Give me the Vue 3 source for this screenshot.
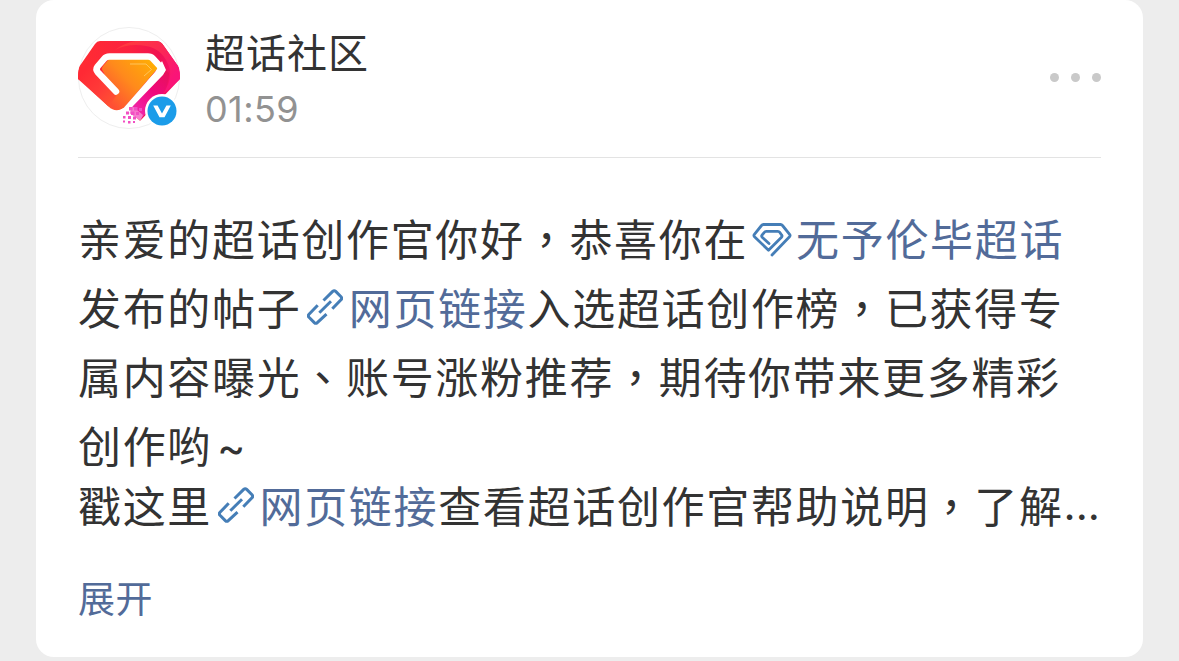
<script setup>
const lines = [
  [
    { type: "text", value: "亲爱的超话创作官你好，恭喜你在" },
    { type: "topic", value: "无予伦毕超话" },
  ],
  [
    { type: "text", value: "发布的帖子" },
    { type: "link", value: "网页链接" },
    { type: "text", value: "入选超话创作榜，已获得专" },
  ],
  [{ type: "text", value: "属内容曝光、账号涨粉推荐，期待你带来更多精彩" }],
  [
    { type: "text", value: "创作哟" },
    { type: "tilde", value: "~" },
  ],
  [
    { type: "text", value: "戳这里" },
    { type: "link", value: "网页链接" },
    { type: "text", value: "查看超话创作官帮助说明，了解" },
    { type: "dots", value: "..." },
  ],
]

// punctuation is centred in its box, so it gets its own font
function split(value){
  return value.split(/([，、])/)
}

function isMark(part){
  return part === "，" || part === "、"
}
</script>

<template>
  <div class="page">
    <article class="card">
      <header class="header">
        <div class="avatar">
          <svg class="logo" viewBox="0 0 102 102">
            <defs>
              <linearGradient id="ring" gradientUnits="userSpaceOnUse" x1="5" y1="40" x2="98" y2="48">
                <stop offset="0" stop-color="#ff2b33" />
                <stop offset="0.5" stop-color="#fb2140" />
                <stop offset="0.8" stop-color="#f01252" />
                <stop offset="1" stop-color="#f80f70" />
              </linearGradient>
              <linearGradient id="right" gradientUnits="userSpaceOnUse" x1="50" y1="14" x2="96" y2="50">
                <stop offset="0" stop-color="#ff3a3f" />
                <stop offset="0.5" stop-color="#fb2a50" />
                <stop offset="1" stop-color="#fa1478" />
              </linearGradient>
              <linearGradient id="left" gradientUnits="userSpaceOnUse" x1="8" y1="42" x2="46" y2="76">
                <stop offset="0" stop-color="#ff2934" />
                <stop offset="0.5" stop-color="#ff3c38" />
                <stop offset="1" stop-color="#ff5c2e" />
              </linearGradient>
              <linearGradient id="gold" gradientUnits="userSpaceOnUse" x1="30" y1="74" x2="72" y2="34">
                <stop offset="0" stop-color="#ff4f34" />
                <stop offset="0.5" stop-color="#ff8a1c" />
                <stop offset="1" stop-color="#ffac06" />
              </linearGradient>
              <linearGradient id="tail" gradientUnits="userSpaceOnUse" x1="90" y1="42" x2="54" y2="90">
                <stop offset="0" stop-color="#e61256" />
                <stop offset="0.45" stop-color="#f0087c" />
                <stop offset="1" stop-color="#f02cb4" />
              </linearGradient>
              <clipPath id="round"><circle cx="51" cy="51" r="51" /></clipPath>
            </defs>
            <circle cx="51" cy="51" r="50.500" fill="#fff" stroke="#eeeeee" />
            <g clip-path="url(#round)">
              <path d="M22 14H78Q82 14 84.500 17L100 39Q103 44 102 52L62 94 50 84 0 52V43Q0 41 1 40L17 17Q19 14 22 14Z" fill="url(#ring)" />
              <path d="M37 23Q46 16 58 14H78Q82 14 84.500 17L100 39Q103 44 102 52L84 68Q98 50 88 33 80 18 58 18 46 18 37 23Z" fill="url(#right)" />
              <path d="M86 42L91 46Q91 58 84 68L62 93 48 84Z" fill="url(#tail)" />
              <path d="M0 43L20 30V44L50 74 47 79.500Q38.500 87 30.500 79.500L0 52Z" fill="url(#left)" />
              <path d="M26 46Q22.500 42 25 39L31 32H71L80 41 47 79.500Q39 86 32 80L30 66Z" fill="url(#gold)" />
              <path d="M20 45L35.500 61 38 69 30.500 79.500 14 64Z" fill="url(#left)" />
              <path d="M46 80.500L77 45 84 34 88 43 85 48 54 80 50 90 38 86.500Q43 84 46 80.500Z" fill="#fff" />
              <path d="M38 64.500L20 45.500Q17.300 42.500 19.600 39.500L26 32Q28 29.600 31.500 29.600H70Q73 29.600 75 31.800L81.500 38.800Q84.500 42 81.500 45.500L72 56" fill="none" stroke="#fff" stroke-width="6.500" stroke-linecap="round" stroke-linejoin="round" />
              <path d="M52 37H68L73.500 42.500 66 49" fill="none" stroke="#ffc45a" stroke-width="1" />
            </g>
            <path d="M44 88L53 78 65 88 60 99H44Z" fill="#fff" fill-opacity="0.400" />
            <g class="pixels">
              <rect x="51" y="80" width="3.500" height="3.500" /><rect x="56" y="80" width="3.500" height="3.500" /><rect x="61" y="81" width="3" height="3" />
              <rect x="48" y="84.500" width="3" height="3" /><rect x="53" y="84.500" width="3.500" height="3.500" /><rect x="58" y="85" width="3" height="3" />
              <rect x="45" y="89" width="2.500" height="2.500" /><rect x="50" y="89" width="3" height="3" /><rect x="55" y="89.500" width="3" height="3" />
              <rect x="45" y="93.500" width="2" height="2" /><rect x="50" y="94" width="2.500" height="2.500" /><rect x="55" y="94" width="2" height="2" />
            </g>
          </svg>
          <svg class="badge" viewBox="0 0 34 34">
            <circle cx="17" cy="17" r="17" fill="#fff" />
            <circle cx="17" cy="17" r="14.500" fill="#1b9ce9" />
            <path d="M8.200 11.600H12.600L17 19.500 21.400 11.600H25.800L19.500 23.200H14.500Z" fill="#fff" />
          </svg>
        </div>
        <div class="info">
          <div class="name">超话社区</div>
          <div class="time">01:59</div>
        </div>
        <div class="more"><i></i><i></i><i></i></div>
      </header>

      <div class="content">
        <p v-for="(line, i) in lines" :key="i" class="line">
          <span v-for="(item, j) in line" :key="j" :class="item.type">
            <svg v-if="item.type === 'topic'" class="gem" viewBox="0 0 40 34">
              <path d="M20 32L37.500 13.800Q38.600 12.600 37.600 11.300L30.500 2.500Q29.800 1.500 28.500 1.500H11.500Q10.200 1.500 9.500 2.500L2.400 11.300Q1.400 12.600 2.500 13.800L16.500 27.200 29.500 14.300Q30.500 13.100 29.600 12L27.700 9.300Q27 8.300 25.800 8.300H14.200Q13 8.300 12.300 9.300L10 12.200Q9.200 13.200 10.200 14.300L17 20.500" />
            </svg>
            <svg v-if="item.type === 'link'" class="chain" viewBox="0 0 36 36">
              <path d="M16.500 11.500L25.700 2.400Q27.200 1 28.700 2.400L34 7.700Q35.400 9.200 34 10.700L25.300 19.700" />
              <path d="M10.700 16.300L2 25.300Q.6 26.800 2 28.300L7.300 33.600Q8.800 35 10.300 33.600L19.500 25.200" />
              <path d="M12.300 23.700L24 12.300" />
            </svg>
            <span v-for="(part, k) in split(item.value)" :key="k" :class="{ mark: isMark(part) }">{{ part }}</span>
          </span>
        </p>
      </div>

      <a class="expand">展开</a>
    </article>
  </div>
</template>

<style>
body {
  margin: 0;
  background-color: #ededed;
  overflow: hidden;
}
</style>

<style scoped>
.page {
  height: 661px;
  padding: 0 36px 4px;
  box-sizing: border-box;
  background-color: #ededed;
  font-family: "Noto Sans CJK SC", "Noto Sans", sans-serif;
  color: #333;
}

.card {
  height: 657px;
  padding: 0 42px;
  box-sizing: border-box;
  border-radius: 18px;
  background-color: #fff;
}

.header {
  display: flex;
  height: 158px;
  padding-top: 27px;
  box-sizing: border-box;
  border-bottom: 1px solid #e3e3e3;
}

.avatar {
  position: relative;
  width: 102px;
  height: 102px;
}

.logo {
  display: block;
  width: 102px;
  height: 102px;
}

.pixels {
  fill: #f24fc3;
}

.badge {
  position: absolute;
  left: 67px;
  top: 67px;
  width: 34px;
  height: 34px;
}

.info {
  flex: 1;
  margin-left: 25px;
}

.name {
  height: 54px;
  line-height: 48px;
  font-size: 40px;
  letter-spacing: 1px;
}

.time {
  height: 54px;
  line-height: 56px;
  font-family: Inter, sans-serif;
  font-size: 36px;
  letter-spacing: 0.4px;
  color: #929292;
}

.more {
  display: flex;
  gap: 12px;
  margin-top: 46px;
}

.more i {
  width: 9px;
  height: 9px;
  border-radius: 50%;
  background-color: #c9c9c9;
}

.content {
  padding-top: 45px;
  font-size: 43px;
  letter-spacing: 1.67px;
}

.line {
  display: flex;
  height: 69px;
  margin: 0;
  line-height: 69px;
  white-space: nowrap;
}

.line:nth-child(4) {
  height: 60px;
}

.line > span {
  display: flex;
  align-items: center;
}

/* the fourth line is shorter, its text keeps the full line box */
.line:nth-child(4) > span {
  height: 69px;
}

.mark {
  font-family: "Noto Sans CJK TC", sans-serif;
}

.topic, .link {
  color: #526b99;
}

.gem, .chain {
  fill: none;
  stroke: #457eb7;
  stroke-width: 2.8;
  stroke-linejoin: round;
  stroke-linecap: round;
}

.gem {
  width: 40px;
  height: 34px;
  margin: 4px 4px 0;
}

.chain {
  width: 36px;
  height: 36px;
  margin: 1px 5.5px 0 6px;
  stroke-linecap: butt;
  stroke-width: 3;
}

.tilde {
  margin-left: 5px;
  padding-top: 3px;
  font-family: Inter, sans-serif;
}

.dots {
  font-family: Inter, sans-serif;
  font-size: 42px;
  letter-spacing: 0;
}

.expand {
  display: block;
  margin-top: 28px;
  line-height: 60px;
  font-size: 37px;
  letter-spacing: 0.5px;
  color: #526b99;
}
</style>
